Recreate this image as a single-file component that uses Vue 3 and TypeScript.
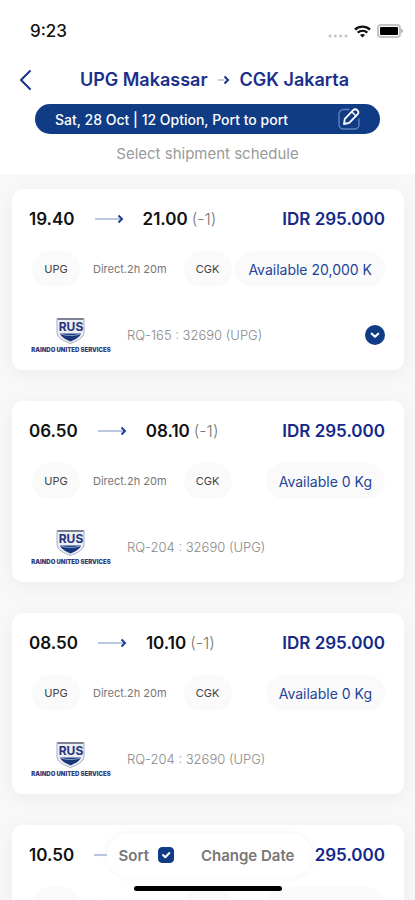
<script setup lang="ts">
import { ref } from 'vue'

interface Schedule {
  id: number
  depart: string
  arrive: string
  dayShift: string
  price: string
  available: string
  flight: string
  expandable: boolean
}

const schedules: Schedule[] = [
  { id: 1, depart: '19.40', arrive: '21.00', dayShift: '(-1)', price: 'IDR 295.000', available: 'Available 20,000 K', flight: 'RQ-165 : 32690 (UPG)', expandable: true },
  { id: 2, depart: '06.50', arrive: '08.10', dayShift: '(-1)', price: 'IDR 295.000', available: 'Available 0 Kg', flight: 'RQ-204 : 32690 (UPG)', expandable: false },
  { id: 3, depart: '08.50', arrive: '10.10', dayShift: '(-1)', price: 'IDR 295.000', available: 'Available 0 Kg', flight: 'RQ-204 : 32690 (UPG)', expandable: false },
  { id: 4, depart: '10.50', arrive: '12.10', dayShift: '(-1)', price: 'IDR 295.000', available: 'Available 0 Kg', flight: 'RQ-204 : 32690 (UPG)', expandable: false },
]

const sorted = ref(true)
</script>

<template>
  <div class="screen">
    <header class="header">
      <div class="status">
        <span class="clock">9:23</span>
        <div class="status-icons">
          <svg width="20" height="4" viewBox="0 0 20 4" fill="#c4c4c4" aria-hidden="true">
            <circle cx="2" cy="2" r="1.5" /><circle cx="7.3" cy="2" r="1.5" /><circle cx="12.6" cy="2" r="1.5" /><circle cx="18" cy="2" r="1.5" />
          </svg>
          <svg width="17" height="13" viewBox="0 0 17 13" fill="none" stroke="#111" aria-hidden="true">
            <path d="M1 4.6C5.2.6 11.8.6 16 4.6" stroke-width="2.4" />
            <path d="M3.7 7.6c2.7-2.5 6.900-2.500 9.600 0" stroke-width="2.2" />
            <path d="M8.500 12.400 6 9.900c1.400-1.300 3.600-1.300 5 0z" fill="#111" stroke="none" />
          </svg>
          <svg width="26" height="14" viewBox="0 0 26 14" aria-hidden="true">
            <rect x="1" y="1" width="22" height="12" rx="3" fill="#fff" stroke="#c4c4c4" stroke-width="2" />
            <rect x="3" y="3" width="18" height="8" rx="1" fill="#000" />
            <path d="M24.400 4.800c1.800.8 1.800 3.600 0 4.400z" fill="#999" />
          </svg>
        </div>
      </div>

      <div class="title-row">
        <button class="back" type="button" aria-label="Back">
          <svg width="14" height="22" viewBox="0 0 14 22" fill="none" stroke="#1b2f8c" stroke-width="2" stroke-linecap="round" stroke-linejoin="round">
            <path d="m11 2-9 9 9 9" />
          </svg>
        </button>
        <h1 class="route">
          <span>UPG Makassar</span>
          <svg width="12" height="10" viewBox="0 0 12 10" fill="none" stroke-width="2" aria-hidden="true">
            <path d="M0 5h6" stroke="#c3cbe2" />
            <path d="m6.500 1.500 3.500 3.500-3.500 3.500" stroke="#1b2f8c" />
          </svg>
          <span>CGK Jakarta</span>
        </h1>
      </div>

      <button class="summary" type="button">
        <span>Sat, 28 Oct | 12 Option, Port to port</span>
        <svg width="24" height="24" viewBox="0 0 24 24" fill="none" stroke-linecap="round" stroke-linejoin="round" aria-hidden="true">
          <path d="M12 2.500H6.500A4.500 4.500 0 0 0 2 7v10.500A4.500 4.500 0 0 0 6.500 22h11a4.500 4.500 0 0 0 4.500-4.500V12" stroke="#5f82b6" stroke-width="1.400" />
          <path d="m7 17 .8-5.200 8.400-8.600c1.500-1.500 3.200-.9 4.200.1s1.500 2.600.1 4.100l-8.300 8.500z" stroke="#fff" stroke-width="1.800" />
          <path d="m15 5 4 4" stroke="#fff" stroke-width="1.500" />
        </svg>
      </button>
      <p class="hint">Select shipment schedule</p>
    </header>

    <main class="list">
      <article v-for="item in schedules" :key="item.id" class="card">
        <div class="times">
          <span class="time">{{ item.depart }}</span>
          <svg class="arrow" width="30" height="10" viewBox="0 0 30 10" fill="none" aria-hidden="true">
            <path d="M1 5h26" stroke="#a3b5da" stroke-width="1.500" />
            <path d="m24.500 1.500 3.500 3.500-3.500 3.500" stroke="#1b3a94" stroke-width="1.900" />
          </svg>
          <span class="time">{{ item.arrive }}</span>
          <span class="shift">{{ item.dayShift }}</span>
          <span class="price">{{ item.price }}</span>
        </div>

        <div class="details">
          <span class="pill port">UPG</span>
          <span class="duration">Direct.2h 20m</span>
          <span class="pill port">CGK</span>
          <span class="pill available">{{ item.available }}</span>
        </div>

        <div class="carrier">
          <svg class="logo" width="86" height="40" viewBox="0 0 86 40" role="img" aria-label="Raindo United Services">
            <path d="M28 3.500h27v13.500c0 6-7 9-13.500 11.500C35 26 28 23 28 17z" fill="#eceef4" stroke="#a9adc0" stroke-width="1" />
            <path d="M28.500 4h26" stroke="#77798c" stroke-width="1.800" />
            <path d="M31 18.500h21c-1.500 4-6 6-10.500 8-4.500-2-9-4-10.500-8z" fill="#18367c" />
            <path d="M31 18.500c5 2.600 16 2.600 21 0" fill="none" stroke="#8fa9cc" stroke-width="1" />
            <text x="42" y="16" text-anchor="middle" class="logo-mark">RUS</text>
            <text x="42" y="37" text-anchor="middle" class="logo-name">RAINDO UNITED SERVICES</text>
          </svg>
          <span class="flight">{{ item.flight }}</span>
          <button v-if="item.expandable" class="expand" type="button" aria-label="Show details">
            <svg width="20" height="20" viewBox="0 0 20 20" fill="none">
              <circle cx="10" cy="10" r="10" fill="#103c85" />
              <path d="m6.800 8.700 3.200 3 3.200-3" stroke="#fff" stroke-width="2.200" stroke-linecap="round" stroke-linejoin="round" />
            </svg>
          </button>
        </div>
      </article>
    </main>

    <div class="toolbar">
      <label class="sort" for="sort-box">
        <span>Sort</span>
        <span class="check">
          <input id="sort-box" v-model="sorted" type="checkbox" />
          <svg v-if="sorted" width="16" height="16" viewBox="0 0 16 16" fill="none" stroke="#fff" stroke-width="2" stroke-linecap="round" stroke-linejoin="round" aria-hidden="true">
            <path d="m5 8 2.300 2.300L11.300 6" />
          </svg>
        </span>
      </label>
      <button class="change" type="button">Change Date</button>
    </div>
    <div class="home-bar"></div>
  </div>
</template>

<style>
body {
  margin: 0;
  background: #f8f8f8;
}
</style>

<style scoped>
.screen {
  position: relative;
  display: flex;
  flex-direction: column;
  height: 100vh;
  overflow: hidden;
  background: #f8f8f8;
  font-family: Inter, "Liberation Sans", sans-serif;
  color: #111;
}
button {
  border: 0;
  padding: 0;
  background: none;
  font: inherit;
  color: inherit;
  cursor: pointer;
}
svg {
  display: block;
  flex: none;
}
.header {
  flex: none;
  display: flex;
  flex-direction: column;
  padding-bottom: 10px;
  background: #fff;
}
.status {
  display: flex;
  align-items: center;
  justify-content: space-between;
  height: 24px;
  padding: 19px 12px 0 30px;
}
.clock {
  font-size: 17px;
  font-weight: 500;
}
.status-icons {
  display: flex;
  align-items: flex-end;
  gap: 6px;
}
.title-row {
  display: grid;
  grid-template-columns: 14px 1fr 14px;
  align-items: center;
  height: 24px;
  margin: 25px 19px 0;
}
.route {
  display: flex;
  align-items: center;
  justify-content: center;
  gap: 10px;
  margin: 0 0 0 14px;
  font-size: 18px;
  line-height: 24px;
  font-weight: 600;
  color: #1b2f8c;
  white-space: nowrap;
}
.summary {
  display: flex;
  align-items: center;
  justify-content: space-between;
  height: 30px;
  margin: 12px 35px 0;
  padding: 0 19px 0 20px;
  border-radius: 15px;
  background: #103c85;
  color: #fff;
  font-size: 14px;
  font-weight: 500;
  white-space: nowrap;
}
.hint {
  margin: 10px 0 0;
  font-size: 15px;
  line-height: 20px;
  text-align: center;
  color: #9a9a9a;
}
.list {
  flex: 1;
  min-height: 0;
  display: flex;
  flex-direction: column;
  gap: 31px;
  padding: 15px 11px 0 12px;
  overflow-y: auto;
  scrollbar-width: none;
}
.card {
  flex: none;
  padding: 18px 19px 15px 17px;
  border-radius: 10px;
  background: #fff;
  box-shadow: 0 4px 20px rgba(0, 0, 0, 0.05);
}
.times {
  display: flex;
  align-items: center;
  height: 24px;
  white-space: nowrap;
}
.time {
  font-size: 17px;
  font-weight: 600;
}
.arrow {
  margin: 0 19px;
}
.shift {
  margin-left: 4px;
  font-size: 16px;
  font-weight: 300;
  color: #777;
}
.price {
  margin-left: auto;
  font-size: 17px;
  font-weight: 600;
  color: #13298a;
}
.details {
  display: flex;
  align-items: center;
  height: 36px;
  margin-top: 20px;
  padding-left: 3px;
  white-space: nowrap;
}
.pill {
  display: flex;
  align-items: center;
  justify-content: center;
  height: 36px;
  border-radius: 18px;
  background: #fafafa;
}
.port {
  width: 48px;
  font-size: 11px;
  color: #444;
}
.duration {
  margin: 0 17px 0 13px;
  font-size: 11px;
  color: #777;
}
.available {
  margin-left: auto;
  padding: 0 13px;
  font-size: 14px;
  color: #24449a;
}
.carrier {
  display: flex;
  align-items: center;
  height: 40px;
  margin-top: 28px;
}
.logo {
  overflow: visible;
}
.logo-mark {
  font-size: 12px;
  font-weight: 700;
  fill: #26357c;
}
.logo-name {
  font-size: 6px;
  font-weight: 900;
  fill: #343c78;
}
.flight {
  margin-left: 12px;
  font-size: 13px;
  font-weight: 300;
  color: #888;
  white-space: nowrap;
}
.expand {
  margin-left: auto;
}
.toolbar {
  position: absolute;
  bottom: 23px;
  left: calc(50% + 2px);
  display: flex;
  align-items: center;
  gap: 27px;
  height: 44px;
  padding: 0 18px 0 12px;
  border-radius: 22px;
  background: #fff;
  box-shadow: 0 0 8px rgba(0, 0, 0, 0.05);
  transform: translateX(-50%);
  font-size: 15px;
  font-weight: 600;
  color: #777;
  white-space: nowrap;
}
.sort {
  display: flex;
  align-items: center;
  gap: 9px;
}
.check {
  display: grid;
}
.check > * {
  grid-area: 1 / 1;
}
.check svg {
  pointer-events: none;
}
.check input {
  appearance: none;
  width: 16px;
  height: 16px;
  margin: 0;
  border: 1px solid #103c85;
  border-radius: 4px;
}
.check input:checked {
  background: #103c85;
}
.home-bar {
  position: absolute;
  bottom: 9px;
  left: 50%;
  width: 148px;
  height: 5px;
  border-radius: 3px;
  background: #000;
  transform: translateX(-50%);
}
</style>
